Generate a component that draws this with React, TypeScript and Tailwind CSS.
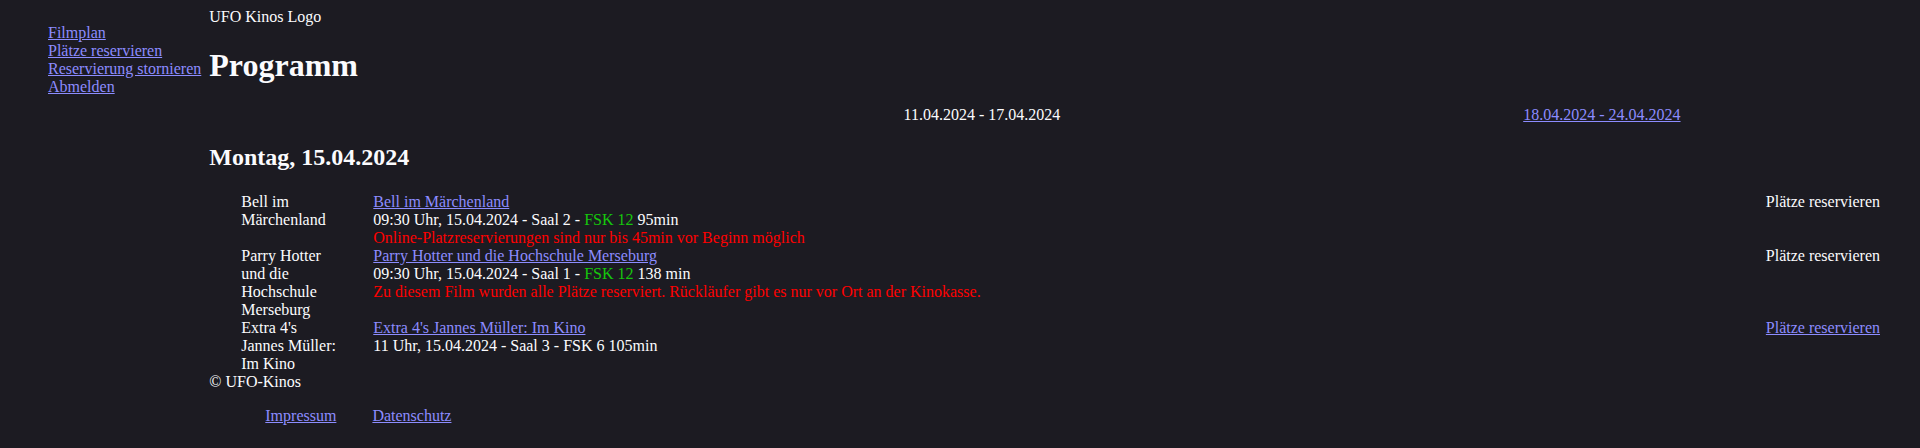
import React from "react";

const link = "text-[#8c8cff] underline";

type Film = {
  short: string;
  title: string;
  info: React.ReactNode;
  note?: string;
  reserveLink: boolean;
};

const films: Film[] = [
  {
    short: "Bell im Märchenland",
    title: "Bell im Märchenland",
    info: (
      <>
        09:30 Uhr, 15.04.2024 - Saal 2 - <span className="text-[#16c60c]">FSK 12</span> 95min
      </>
    ),
    note: "Online-Platzreservierungen sind nur bis 45min vor Beginn möglich",
    reserveLink: false,
  },
  {
    short: "Parry Hotter und die Hochschule Merseburg",
    title: "Parry Hotter und die Hochschule Merseburg",
    info: (
      <>
        09:30 Uhr, 15.04.2024 - Saal 1 - <span className="text-[#16c60c]">FSK 12</span> 138 min
      </>
    ),
    note: "Zu diesem Film wurden alle Plätze reserviert. Rückläufer gibt es nur vor Ort an der Kinokasse.",
    reserveLink: false,
  },
  {
    short: "Extra 4's Jannes Müller: Im Kino",
    title: "Extra 4's Jannes Müller: Im Kino",
    info: <>11 Uhr, 15.04.2024 - Saal 3 - FSK 6 105min</>,
    reserveLink: true,
  },
];

export default function App() {
  return (
    <div className="min-h-screen bg-[#1c1b22] text-[#fbfbfe] font-['Liberation_Serif',serif] text-[16px] leading-[normal] p-2">
      <div className="flex gap-2">
        <nav className="shrink-0">
          <ul className="my-4 pl-10">
            <li><a href="#" className={link}>Filmplan</a></li>
            <li><a href="#" className={link}>Plätze reservieren</a></li>
            <li><a href="#" className={link}>Reservierung stornieren</a></li>
            <li><a href="#" className={link}>Abmelden</a></li>
          </ul>
        </nav>
        <main className="flex-1">
          <div>UFO Kinos Logo</div>
          <h1 className="text-[32px] leading-[normal] font-bold my-[21.44px]">Programm</h1>
          <div className="flex justify-around">
            <span></span>
            <span>11.04.2024 - 17.04.2024</span>
            <a href="#" className={link}>18.04.2024 - 24.04.2024</a>
          </div>
          <h2 className="text-[24px] leading-[normal] font-bold my-[19.92px]">Montag, 15.04.2024</h2>
          <div className="grid grid-cols-[100px_1fr_auto] gap-x-8 px-8 pt-[2px]">
            {films.map((f) => (
              <React.Fragment key={f.title}>
                <div>{f.short}</div>
                <div>
                  <div><a href="#" className={link}>{f.title}</a></div>
                  <div>{f.info}</div>
                  {f.note && <div className="text-[#ff0000]">{f.note}</div>}
                </div>
                <div>
                  {f.reserveLink ? (
                    <a href="#" className={link}>Plätze reservieren</a>
                  ) : (
                    <span>Plätze reservieren</span>
                  )}
                </div>
              </React.Fragment>
            ))}
          </div>
          <footer>
            <div>© UFO-Kinos</div>
            <ul className="flex my-4 pl-[56px] gap-[36px]">
              <li><a href="#" className={link}>Impressum</a></li>
              <li><a href="#" className={link}>Datenschutz</a></li>
            </ul>
          </footer>
        </main>
      </div>
    </div>
  );
}
